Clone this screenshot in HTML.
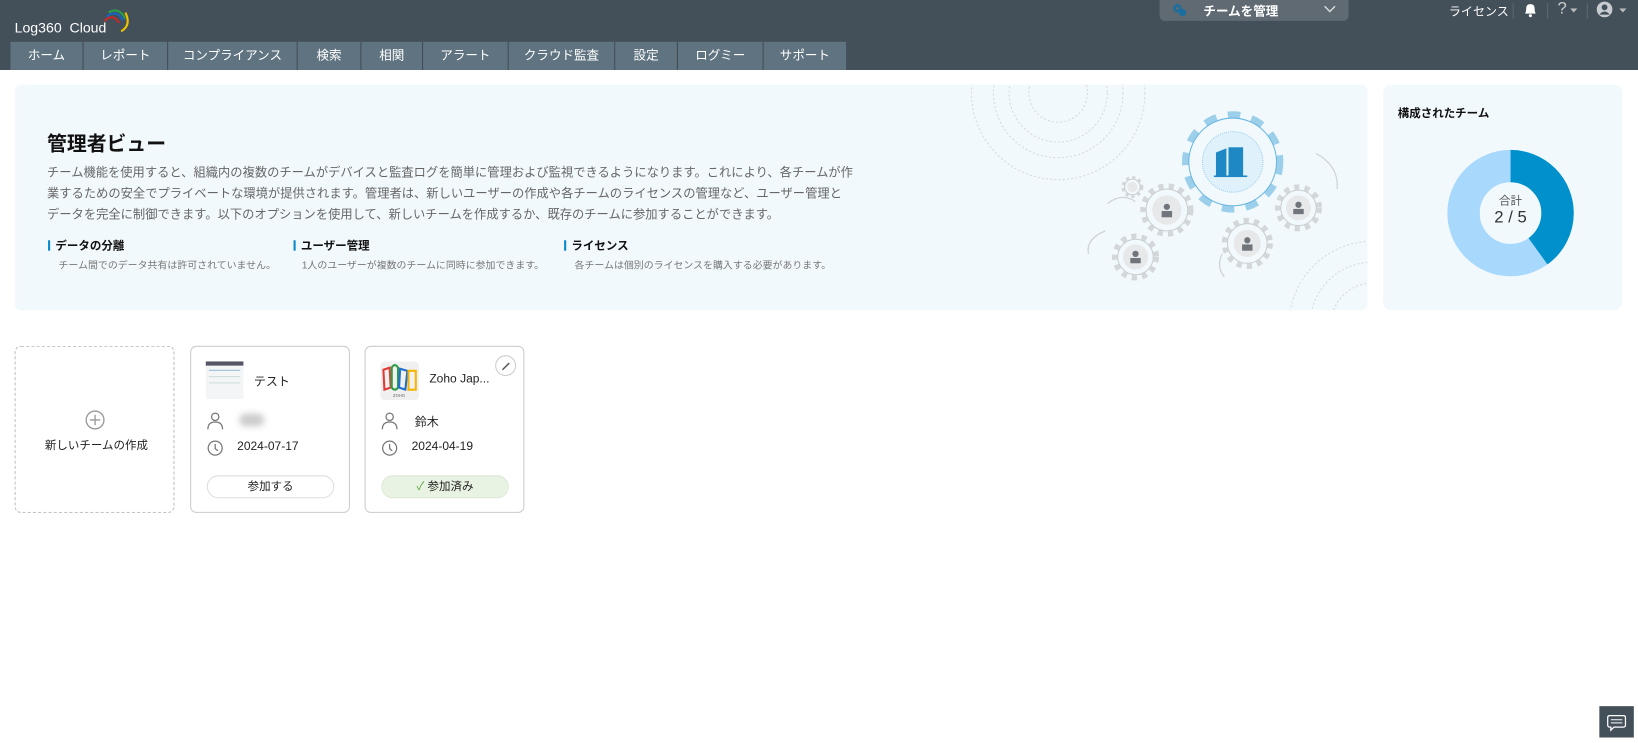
<!DOCTYPE html>
<html><head><meta charset="utf-8"><style>
html,body{margin:0;padding:0;width:1638px;height:738px;overflow:hidden;background:#fff}
#w{position:absolute;left:0;top:0;width:1568px;height:706px;transform:scale(1.04464);transform-origin:0 0;font-family:"Liberation Sans","Noto Sans CJK JP",sans-serif;color:#222}
.a{position:absolute}
.hdr{left:0;top:0;width:1568px;height:67px;background:#434f59}
.nav{left:10px;top:40px;height:27px;display:flex}
.nav div{height:27px;line-height:27px;background:#5f7380;color:#fff;font-size:12px;text-align:center;border-right:1px solid #3f4b55;box-sizing:border-box}
.banner{left:14px;top:81px;width:1295px;height:216px;background:#f2f9fd;border-radius:6px;overflow:hidden}
.side{left:1324px;top:81px;width:229px;height:216px;background:#f2f9fd;border-radius:8px}
.feat{font-size:11px;font-weight:bold;color:#111}
.feat i{display:inline-block;width:2px;height:10px;background:#0a88c9;margin-right:5px;vertical-align:-1px}
.sub{font-size:9.5px;color:#777}
.card{top:331px;width:153px;height:160px;border:1px solid #ccc;border-radius:6px;box-sizing:border-box;background:#fff}
.btn{position:absolute;left:15px;top:123px;width:122px;height:22px;border:1px solid #ddd;border-radius:12px;box-sizing:border-box;font-size:11px;text-align:center;line-height:20px}
.lbl{position:absolute;font-size:11.5px;color:#222}
</style></head><body><div id="w">
<div class="a hdr"></div>
<div class="a" style="left:14px;top:19px;color:#fff;font-size:13.5px">Log360&nbsp; Cloud</div>
<svg class="a" style="left:96px;top:4px" width="30" height="30" viewBox="0 0 30 30" fill="none">
<path d="M8 8 Q18 2 24 14" stroke="#2a9d4a" stroke-width="2"/>
<path d="M6 12 Q16 4 22 16" stroke="#1565c0" stroke-width="2"/>
<path d="M4 16 Q12 8 18 18" stroke="#c62828" stroke-width="2"/>
<path d="M24 8 Q30 20 20 26" stroke="#f2c200" stroke-width="2"/>
</svg>
<div class="a" style="left:1110px;top:0;width:181px;height:20px;background:#5f6a73;border-radius:0 0 5px 5px"></div>
<svg class="a" style="left:1122px;top:3px" width="14" height="13" viewBox="0 0 14 13"><circle cx="5" cy="5" r="4" fill="#1a6fa0"/><circle cx="10" cy="9" r="3.5" fill="#1a6fa0"/><circle cx="5" cy="5" r="1.5" fill="#5f6a73"/></svg>
<div class="a" style="left:1152px;top:2px;color:#fff;font-size:12px;font-weight:bold">チームを管理</div>
<svg class="a" style="left:1267px;top:5px" width="12" height="8"><path d="M1 1 L6 6 L11 1" stroke="#ddd" fill="none" stroke-width="1.3"/></svg>
<div class="a" style="left:1387px;top:3px;color:#fff;font-size:11.5px">ライセンス</div>
<div class="a" style="left:1448px;top:3px;width:1px;height:15px;background:#5d6870"></div>
<svg class="a" style="left:1458px;top:2px" width="14" height="15" viewBox="0 0 14 15"><path d="M2 11 Q3 9 3 6 Q3 2 7 2 Q11 2 11 6 Q11 9 12 11 Z" fill="#fff"/><circle cx="7" cy="13" r="1.5" fill="#fff"/></svg>
<div class="a" style="left:1481px;top:3px;width:1px;height:15px;background:#5d6870"></div>
<div class="a" style="left:1491px;top:0px;color:#ccc;font-size:16px">?</div>
<svg class="a" style="left:1503px;top:8px" width="8" height="5"><path d="M0 0H7L3.5 4Z" fill="#bbb"/></svg>
<div class="a" style="left:1519px;top:3px;width:1px;height:15px;background:#5d6870"></div>
<svg class="a" style="left:1528px;top:1px" width="16" height="16" viewBox="0 0 16 16"><circle cx="8" cy="8" r="7.5" fill="#c8ccd0"/><circle cx="8" cy="6" r="2.8" fill="#434f59"/><path d="M3 13 Q8 7 13 13" fill="#434f59"/></svg>
<svg class="a" style="left:1550px;top:8px" width="8" height="5"><path d="M0 0H7L3.5 4Z" fill="#bbb"/></svg>
<div class="a nav">
<div style="width:70px">ホーム</div><div style="width:81px">レポート</div><div style="width:124px">コンプライアンス</div><div style="width:61px">検索</div><div style="width:59px">相関</div><div style="width:82px">アラート</div><div style="width:102px">クラウド監査</div><div style="width:60px">設定</div><div style="width:82px">ログミー</div><div style="width:80px">サポート</div>
</div>

<div class="a banner">
<svg class="a" style="left:0;top:0" width="1295" height="216" fill="none">
<g stroke="#d5d9dc" stroke-dasharray="2 2">
<circle cx="999" cy="8" r="28"/><circle cx="999" cy="8" r="47"/><circle cx="999" cy="8" r="62"/><circle cx="999" cy="8" r="83"/>
<circle cx="1300" cy="230" r="40"/><circle cx="1300" cy="230" r="60"/><circle cx="1300" cy="230" r="80"/>
</g>
<g stroke="#cfd3d6" stroke-width="1.2">
<path d="M1046 114 Q1060 103 1073 112"/><path d="M1044 140 Q1025 148 1028 162"/><path d="M1156 162 Q1150 174 1158 184"/><path d="M1246 66 Q1268 78 1266 100"/>
</g>
<g stroke="#d4d7da" stroke-width="5" stroke-dasharray="5 5" fill="none">
<circle cx="1103" cy="120" r="23"/><circle cx="1073" cy="165" r="20"/><circle cx="1180" cy="152" r="22"/><circle cx="1229" cy="118" r="20"/><circle cx="1070" cy="98" r="9" stroke-width="3" stroke-dasharray="3 3"/>
</g>
<g fill="#f2f9fd" stroke="#c9cdd0"><circle cx="1103" cy="120" r="20"/><circle cx="1073" cy="165" r="17"/><circle cx="1180" cy="152" r="19"/><circle cx="1229" cy="118" r="17"/><circle cx="1070" cy="98" r="7.5"/></g>
<g fill="#e6e8ea"><circle cx="1103" cy="120" r="14"/><circle cx="1073" cy="165" r="12"/><circle cx="1180" cy="152" r="13"/><circle cx="1229" cy="118" r="12"/><circle cx="1070" cy="98" r="5"/></g>
<g fill="#6f757a"><circle cx="1103" cy="117" r="3"/><rect x="1098" y="121" width="10" height="6"/><circle cx="1073" cy="162" r="3"/><rect x="1068" y="166" width="10" height="5"/><circle cx="1180" cy="149" r="3"/><rect x="1175" y="153" width="10" height="6"/><circle cx="1229" cy="115" r="3"/><rect x="1224" y="119" width="10" height="5"/></g>
<circle cx="1166" cy="74" r="45" stroke="#9ccfea" stroke-width="7" stroke-dasharray="12 11" fill="none"/>
<circle cx="1166" cy="74" r="42" fill="#f2f9fd" stroke="#6ab7e0"/>
<circle cx="1166" cy="74" r="29" fill="#dff1fb" stroke="#9ccfea" stroke-dasharray="1 1"/>
<g fill="#1e88c4"><path d="M1150 65 L1160 61 V87 H1150Z"/><rect x="1162" y="60" width="14" height="27"/><rect x="1148" y="87" width="32" height="1.5"/></g>
</svg>
<div class="a" style="left:31px;top:42px;font-size:19px;font-weight:bold;color:#111">管理者ビュー</div>
<div class="a" style="left:31px;top:75px;width:772px;font-size:11.75px;line-height:20px;color:#666">チーム機能を使用すると、組織内の複数のチームがデバイスと監査ログを簡単に管理および監視できるようになります。これにより、各チームが作業するための安全でプライベートな環境が提供されます。管理者は、新しいユーザーの作成や各チームのライセンスの管理など、ユーザー管理とデータを完全に制御できます。以下のオプションを使用して、新しいチームを作成するか、既存のチームに参加することができます。</div>
<div class="a feat" style="left:32px;top:146px"><i></i>データの分離</div>
<div class="a sub" style="left:42px;top:165px">チーム間でのデータ共有は許可されていません。</div>
<div class="a feat" style="left:267px;top:146px"><i></i>ユーザー管理</div>
<div class="a sub" style="left:275px;top:165px">1人のユーザーが複数のチームに同時に参加できます。</div>
<div class="a feat" style="left:526px;top:146px"><i></i>ライセンス</div>
<div class="a sub" style="left:536px;top:165px">各チームは個別のライセンスを購入する必要があります。</div>
</div>

<div class="a side">
<div class="a" style="left:14px;top:19px;font-size:11px;font-weight:bold;color:#111">構成されたチーム</div>
<svg class="a" style="left:61px;top:62px" width="122" height="122" viewBox="-61 -61 122 122">
<circle r="45" fill="none" stroke="#a8d8fb" stroke-width="31"/>
<circle r="45" fill="none" stroke="#0091cd" stroke-width="31" stroke-dasharray="113.1 400" transform="rotate(-90)"/>
<circle r="29" fill="#f2f9fd"/>
</svg>
<div class="a" style="left:102px;top:103px;width:40px;text-align:center;font-size:11px;color:#555">合計</div>
<div class="a" style="left:97px;top:119px;width:50px;text-align:center;font-size:16px;color:#333">2 / 5</div>
</div>

<div class="a card" style="left:14px;border:1px dashed #bbb">
<svg class="a" style="left:66px;top:60px" width="20" height="20"><circle cx="10" cy="10" r="8.5" fill="none" stroke="#999" stroke-width="1.3"/><path d="M10 5V15M5 10H15" stroke="#999" stroke-width="1.3"/></svg>
<div class="lbl" style="left:28px;top:86px;font-size:11px">新しいチームの作成</div>
</div>

<div class="a card" style="left:182px">
<div class="a" style="left:14px;top:14px;width:36px;height:36px;background:#f4f5f6"><div style="height:4px;background:#556"></div><div style="margin:4px 3px;height:1px;background:#9bd"></div><div style="margin:5px 3px;height:1px;background:#cdd"></div><div style="margin:5px 3px;height:1px;background:#cdd"></div></div>
<div class="lbl" style="left:60px;top:25px">テスト</div>
<svg class="a" style="left:15px;top:62px" width="16" height="18"><circle cx="8" cy="5" r="3.5" fill="none" stroke="#777" stroke-width="1.2"/><path d="M1 17 Q1 10 8 10 Q15 10 15 17" fill="none" stroke="#777" stroke-width="1.2"/></svg>
<div class="a" style="left:46px;top:64px;width:24px;height:12px;background:#ccc;border-radius:6px;filter:blur(3px)"></div>
<svg class="a" style="left:15px;top:89px" width="16" height="16"><circle cx="8" cy="8" r="6.7" fill="none" stroke="#777" stroke-width="1.2"/><path d="M8 4V8.5L10.5 10.5" fill="none" stroke="#777" stroke-width="1.2"/></svg>
<div class="lbl" style="left:44px;top:90px">2024-07-17</div>
<div class="btn">参加する</div>
</div>

<div class="a card" style="left:349px">
<svg class="a" style="left:14px;top:14px" width="37" height="37" viewBox="0 0 37 37"><rect width="37" height="37" rx="4" fill="#f0f0f0"/><path d="M3 8 L9 6 L10 25 L4 27Z" fill="none" stroke="#e53935" stroke-width="2"/><path d="M11 6 Q14 1 17 6 L17 25 Q14 29 11 25Z" fill="none" stroke="#2e9d46" stroke-width="2"/><path d="M19 7 L26 9 L24 27 L18 25Z" fill="none" stroke="#1e6fd0" stroke-width="2"/><path d="M27 9 H34 V27 H27Z" fill="none" stroke="#f5b400" stroke-width="2"/><text x="18" y="34" font-size="4" fill="#666" text-anchor="middle" font-family="Liberation Sans">ZOHO</text></svg>
<div class="lbl" style="left:61px;top:25px">Zoho Jap...</div>
<div class="a" style="left:124px;top:8px;width:20px;height:20px;border:1px solid #ccc;border-radius:50%;box-sizing:border-box"><svg width="18" height="18"><path d="M6 12 L12 6 L13 7 L7 13 L5.5 13.5Z" fill="#555"/></svg></div>
<svg class="a" style="left:15px;top:62px" width="16" height="18"><circle cx="8" cy="5" r="3.5" fill="none" stroke="#777" stroke-width="1.2"/><path d="M1 17 Q1 10 8 10 Q15 10 15 17" fill="none" stroke="#777" stroke-width="1.2"/></svg>
<div class="lbl" style="left:47px;top:64px">鈴木</div>
<svg class="a" style="left:15px;top:89px" width="16" height="16"><circle cx="8" cy="8" r="6.7" fill="none" stroke="#777" stroke-width="1.2"/><path d="M8 4V8.5L10.5 10.5" fill="none" stroke="#777" stroke-width="1.2"/></svg>
<div class="lbl" style="left:44px;top:90px">2024-04-19</div>
<div class="btn" style="background:#e9f3e3;border-color:#dde8d7"><span style="color:#5aa640">✓</span>&nbsp;参加済み</div>
</div>

<div class="a" style="left:1531px;top:676px;width:33px;height:30px;background:#434f59"><svg width="33" height="30"><path d="M10 9 H23 Q25 9 25 11 V18 Q25 20 23 20 H14 L11 23 V20 H10 Q8 20 8 18 V11 Q8 9 10 9Z" fill="none" stroke="#fff" stroke-width="1.2"/><path d="M11 13H22M11 16H22" stroke="#fff"/></svg></div>
</div></body></html>
